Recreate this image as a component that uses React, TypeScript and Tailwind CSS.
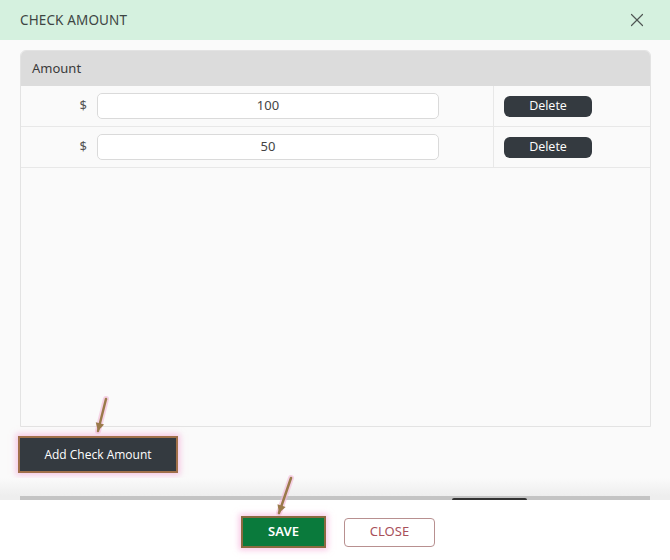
import { X } from "lucide-react";

type CheckRow = {
  id: number;
  amount: string;
};

const rows: CheckRow[] = [
  { id: 1, amount: "100" },
  { id: 2, amount: "50" },
];

function Arrow({ x1, y1, x2, y2 }: { x1: number; y1: number; x2: number; y2: number }) {
  const angle = Math.atan2(y2 - y1, x2 - x1);
  const size = 9;
  const left = [
    x2 - size * Math.cos(angle - 0.5),
    y2 - size * Math.sin(angle - 0.5),
  ];
  const right = [
    x2 - size * Math.cos(angle + 0.5),
    y2 - size * Math.sin(angle + 0.5),
  ];

  return (
    <g>
      <line
        x1={x1}
        y1={y1}
        x2={x2}
        y2={y2}
        stroke="#f4b8d8"
        strokeWidth={6}
        strokeLinecap="round"
        opacity={0.6}
      />
      <line x1={x1} y1={y1} x2={x2} y2={y2} stroke="#9a7a4a" strokeWidth={2.5} strokeLinecap="round" />
      <polygon
        points={`${x2},${y2} ${left[0]},${left[1]} ${right[0]},${right[1]}`}
        fill="#9a7a4a"
      />
    </g>
  );
}

export default function App() {
  return (
    <div
      className="relative flex h-[560px] w-[670px] flex-col overflow-hidden bg-white"
      style={{ fontFamily: '"Noto Sans", "Open Sans", sans-serif' }}
    >
      <header className="flex h-[40px] shrink-0 items-center justify-between bg-[#d5f1df] pl-[20px] pr-[22px]">
        <h2 className="text-[13.5px] tracking-[0.01em] text-[#3d4543]">CHECK AMOUNT</h2>
        <X size={22} strokeWidth={1.3} className="text-[#505653]" />
      </header>

      <div className="flex flex-1 flex-col bg-[#fafafa]">
        <div className="mx-[19px] mt-[10px] ml-[20px] h-[377px] overflow-hidden rounded-t-[6px] border border-[#e3e3e3] bg-[#fafafa]">
          <div className="flex h-[35px] items-center bg-[#dcdcdc] pl-[11px] text-[13px] text-[#3a3a3a]">
            Amount
          </div>
          {rows.map((row) => (
            <div key={row.id} className="flex h-[41px] border-b border-[#e8e8e8]">
              <div className="flex w-[472px] items-center justify-end gap-[10px] pr-[54px]">
                <span className="text-[13px] text-[#555]">$</span>
                <div className="flex h-[26px] w-[342px] items-center justify-center rounded-[5px] border border-[#dadada] bg-white text-[13px] text-[#444]">
                  {row.amount}
                </div>
              </div>
              <div className="flex flex-1 items-center border-l border-[#e8e8e8] pl-[10px]">
                <button
                  type="button"
                  className="h-[21px] w-[88px] rounded-[6px] bg-[#343a40] text-[12.5px] font-medium text-white"
                  style={{ fontFamily: '"Open Sans", sans-serif' }}
                >
                  Delete
                </button>
              </div>
            </div>
          ))}
        </div>

        <div className="mt-[9px] pl-[18px]">
          <button
            type="button"
            className="h-[37px] w-[160px] border-2 border-[#a0704a] bg-[#343a40] text-[12px] text-white shadow-[0_0_6px_2px_rgba(244,160,210,0.6)]"
            style={{ fontFamily: '"Open Sans", sans-serif' }}
          >
            Add Check Amount
          </button>
        </div>

        <div className="mt-auto h-[18px] bg-gradient-to-b from-[#fafafa] to-[#eeeeee]" />
        <div className="bg-[#eeeeee] px-[20px]">
          <div className="relative h-[4px] bg-[#c4c4c4]">
            <div className="absolute left-[432px] top-[2px] h-[2px] w-[75px] rounded-t bg-[#333]" />
          </div>
        </div>
      </div>

      <footer className="flex h-[60px] shrink-0 items-center justify-center gap-[18px] bg-white pl-[6px] pt-[4px]">
        <button
          type="button"
          className="h-[32px] w-[85px] border-2 border-[#8a6a40] bg-[#0a7a3c] text-[13px] font-semibold text-white shadow-[0_0_6px_2px_rgba(244,160,210,0.6)]"
        >
          SAVE
        </button>
        <button
          type="button"
          className="h-[29px] w-[91px] rounded-[4px] border border-[#b89090] bg-white text-[13px] text-[#a8505a]"
        >
          CLOSE
        </button>
      </footer>

      <svg className="pointer-events-none absolute inset-0" width={670} height={560}>
        <Arrow x1={106} y1={399} x2={98} y2={431} />
        <Arrow x1={291} y1={478} x2={279} y2={513} />
      </svg>
    </div>
  );
}
